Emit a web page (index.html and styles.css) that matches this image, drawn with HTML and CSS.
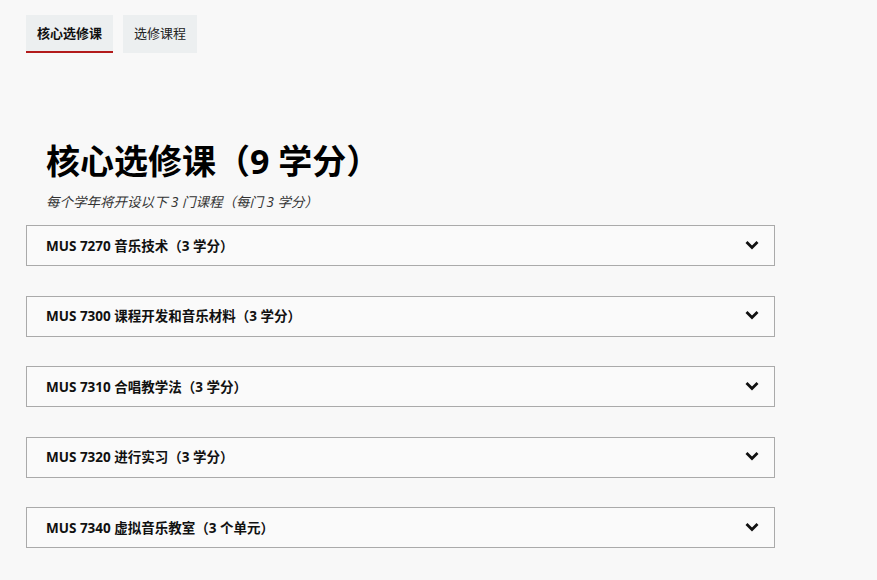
FILE: index.html
```html
<!DOCTYPE html>
<html lang="zh">
<head>
<meta charset="utf-8">
<link rel="stylesheet" href="styles.css">
</head>
<body>
<div class="page">
  <nav class="tabs">
    <div class="tab active">核心选修课</div>
    <div class="tab">选修课程</div>
  </nav>
  <section class="panel">
    <h1 class="title">核心选修课（9 学分）</h1>
    <p class="sub">每个学年将开设以下 3 门课程（每门 3 学分）</p>
    <div class="list">
      <div class="item"><span>MUS 7270 音乐技术（3 学分）</span><svg class="chev" viewBox="0 0 14 10" width="14" height="10"><path d="M1.5 2 L7 7.5 L12.5 2" fill="none" stroke="#111" stroke-width="2.8"/></svg></div>
      <div class="item"><span>MUS 7300 课程开发和音乐材料（3 学分）</span><svg class="chev" viewBox="0 0 14 10" width="14" height="10"><path d="M1.5 2 L7 7.5 L12.5 2" fill="none" stroke="#111" stroke-width="2.8"/></svg></div>
      <div class="item"><span>MUS 7310 合唱教学法（3 学分）</span><svg class="chev" viewBox="0 0 14 10" width="14" height="10"><path d="M1.5 2 L7 7.5 L12.5 2" fill="none" stroke="#111" stroke-width="2.8"/></svg></div>
      <div class="item"><span>MUS 7320 进行实习（3 学分）</span><svg class="chev" viewBox="0 0 14 10" width="14" height="10"><path d="M1.5 2 L7 7.5 L12.5 2" fill="none" stroke="#111" stroke-width="2.8"/></svg></div>
      <div class="item"><span>MUS 7340 虚拟音乐教室（3 个单元）</span><svg class="chev" viewBox="0 0 14 10" width="14" height="10"><path d="M1.5 2 L7 7.5 L12.5 2" fill="none" stroke="#111" stroke-width="2.8"/></svg></div>
    </div>
  </section>
</div>
</body>
</html>
```
FILE: styles.css
```css
html, body {
  margin: 0;
  padding: 0;
  background: #f8f8f8;
  font-family: "Noto Sans", "Noto Sans CJK SC", sans-serif;
  color: #111;
}
.page {
  padding: 15px 0 0 26px;
  width: 749px;
}
.tabs {
  display: flex;
  gap: 10px;
}
.tab {
  background: #eceff0;
  height: 38px;
  box-sizing: border-box;
  padding: 0 11px 3px;
  display: flex;
  align-items: center;
  font-size: 13px;
  color: #222;
}
.tab.active {
  font-weight: 700;
  border-bottom: 2px solid #b31b1b;
  padding-bottom: 2px;
  color: #111;
}
.panel {
  padding-top: 86px;
}
.title {
  margin: 0 0 0 20px;
  font-size: 34px;
  line-height: 44px;
  font-weight: 700;
  color: #000;
}
.sub {
  margin: 9px 0 0 20px;
  font-size: 13.5px;
  line-height: 20px;
  font-style: italic;
  color: #333;
}
.list {
  margin-top: 13px;
  display: flex;
  flex-direction: column;
  gap: 29.5px;
}
.item {
  height: 41px;
  box-sizing: border-box;
  border: 1px solid #aaaaaa;
  background: #fafafa;
  display: flex;
  align-items: center;
  justify-content: space-between;
  padding: 0 15px 2px 19px;
  font-size: 13.5px;
  font-weight: 700;
}
.chev {
  display: block;
}
```
